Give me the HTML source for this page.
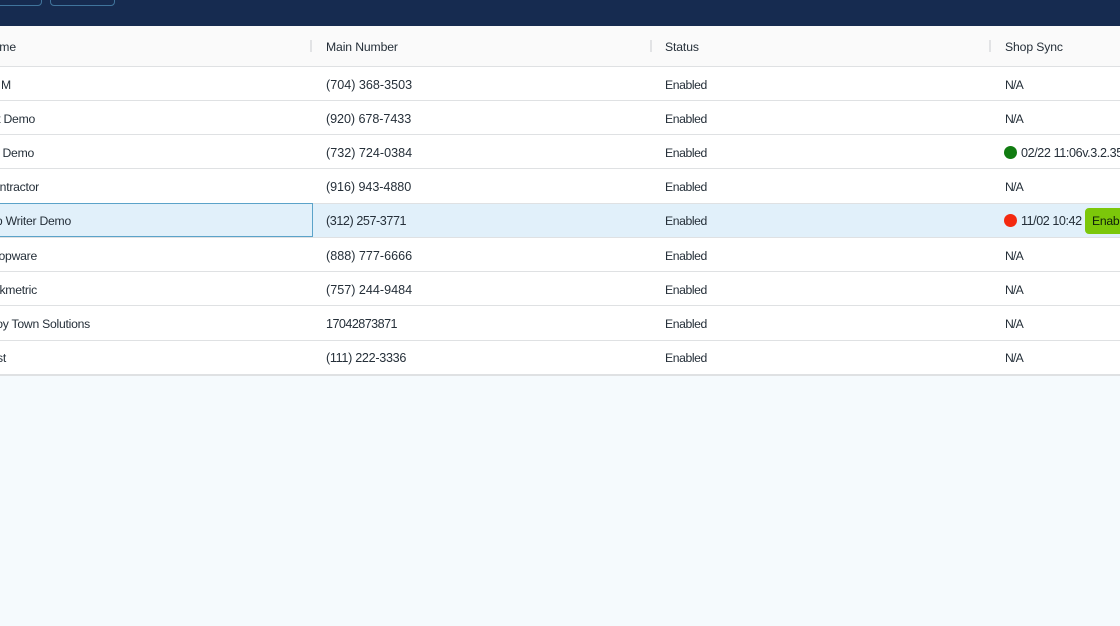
<!DOCTYPE html>
<html><head><meta charset="utf-8"><style>
html,body{margin:0;padding:0}
body{width:1120px;height:626px;overflow:hidden;position:relative;background:#f5fafd;font-family:"Liberation Sans",sans-serif;font-size:12.6px;color:#252f39}
div{position:absolute;box-sizing:border-box}
.t{white-space:nowrap;line-height:16px;height:16px}
.w{font-size:12.2px;letter-spacing:-.25px}
.h{font-size:12.2px;letter-spacing:-.12px}
.n{font-size:12.2px;letter-spacing:-.8px}
.l{left:0;width:1120px;height:1px;background:#dfe1e3}
.s{top:40px;width:2px;height:12px;background:#e2e3e5}
</style></head><body>
<div style="left:0;top:0;width:1120px;height:26px;background:#162b50"></div>
<div style="left:-20px;top:-15px;width:62px;height:21px;border:1px solid #40749c;border-radius:4px"></div>
<div style="left:50px;top:-15px;width:65px;height:21px;border:1px solid #40749c;border-radius:4px"></div>
<div style="left:0;top:26px;width:1120px;height:40px;background:#fafafa"></div>
<div style="left:0;top:66px;width:1120px;height:309px;background:#fff"></div>
<div style="left:0;top:204px;width:1120px;height:33px;background:#e1f0fa"></div>
<div class="l" style="top:66px"></div>
<div class="l" style="top:100px"></div>
<div class="l" style="top:134px"></div>
<div class="l" style="top:168px"></div>
<div class="l" style="top:203px"></div>
<div class="l" style="top:237px"></div>
<div class="l" style="top:271px"></div>
<div class="l" style="top:305px"></div>
<div class="l" style="top:340px"></div>
<div class="l" style="top:374px;height:2px"></div>
<div style="left:-2px;top:203px;width:315px;height:34px;border:1px solid #5ba3c9"></div>
<div class="s" style="left:310px"></div>
<div class="s" style="left:650px"></div>
<div class="s" style="left:989px"></div>
<div class="t h" style="right:1104px;top:39px">Name</div>
<div class="t h" style="left:326px;top:39px">Main Number</div>
<div class="t h" style="left:665px;top:39px">Status</div>
<div class="t h" style="left:1005px;top:39px">Shop Sync</div>
<div class="t w" style="left:1px;top:77px">M</div>
<div class="t w" style="right:1085px;top:111px">Test Demo</div>
<div class="t w" style="right:1086px;top:145px">Test Demo</div>
<div class="t w" style="right:1081px;top:179px">Contractor</div>
<div class="t w" style="right:1049px;top:213px">Shop Writer Demo</div>
<div class="t w" style="right:1083px;top:248px">Shopware</div>
<div class="t w" style="right:1083px;top:282px">Tekmetric</div>
<div class="t w" style="right:1030px;top:316px">Toy Town Solutions</div>
<div class="t w" style="right:1114px;top:350px">Test</div>
<div class="t" style="left:326px;top:77px">(704) 368-3503</div>
<div class="t" style="left:326px;top:111px;letter-spacing:-.07px">(920) 678-7433</div>
<div class="t" style="left:326px;top:145px">(732) 724-0384</div>
<div class="t" style="left:326px;top:179px;letter-spacing:-.07px">(916) 943-4880</div>
<div class="t" style="left:326px;top:213px;letter-spacing:-.43px">(312) 257-3771</div>
<div class="t" style="left:326px;top:248px">(888) 777-6666</div>
<div class="t" style="left:326px;top:282px">(757) 244-9484</div>
<div class="t" style="left:326px;top:316px;letter-spacing:-.55px">17042873871</div>
<div class="t" style="left:326px;top:350px;letter-spacing:-.3px">(111) 222-3336</div>
<div class="t w" style="left:665px;top:77px;letter-spacing:-.4px">Enabled</div>
<div class="t w" style="left:665px;top:111px;letter-spacing:-.4px">Enabled</div>
<div class="t w" style="left:665px;top:145px;letter-spacing:-.4px">Enabled</div>
<div class="t w" style="left:665px;top:179px;letter-spacing:-.4px">Enabled</div>
<div class="t w" style="left:665px;top:213px;letter-spacing:-.4px">Enabled</div>
<div class="t w" style="left:665px;top:248px;letter-spacing:-.4px">Enabled</div>
<div class="t w" style="left:665px;top:282px;letter-spacing:-.4px">Enabled</div>
<div class="t w" style="left:665px;top:316px;letter-spacing:-.4px">Enabled</div>
<div class="t w" style="left:665px;top:350px;letter-spacing:-.4px">Enabled</div>
<div class="t n" style="left:1005px;top:77px">N/A</div>
<div class="t n" style="left:1005px;top:111px">N/A</div>
<div style="left:1004px;top:146px;width:13px;height:13px;border-radius:50%;background:#117c11"></div>
<div class="t" style="left:1021px;top:145px;letter-spacing:-.4px">02/22 11:06v.3.2.35</div>
<div class="t n" style="left:1005px;top:179px">N/A</div>
<div style="left:1004px;top:214px;width:13px;height:13px;border-radius:50%;background:#f4290f"></div>
<div class="t" style="left:1021px;top:213px;letter-spacing:-.45px">11/02 10:42</div>
<div style="left:1085px;top:208px;width:60px;height:26px;border-radius:4px;background:#7cc70a"></div>
<div class="t w" style="left:1092px;top:213px;color:#10200a">Enable</div>
<div class="t n" style="left:1005px;top:248px">N/A</div>
<div class="t n" style="left:1005px;top:282px">N/A</div>
<div class="t n" style="left:1005px;top:316px">N/A</div>
<div class="t n" style="left:1005px;top:350px">N/A</div>
</body></html>
